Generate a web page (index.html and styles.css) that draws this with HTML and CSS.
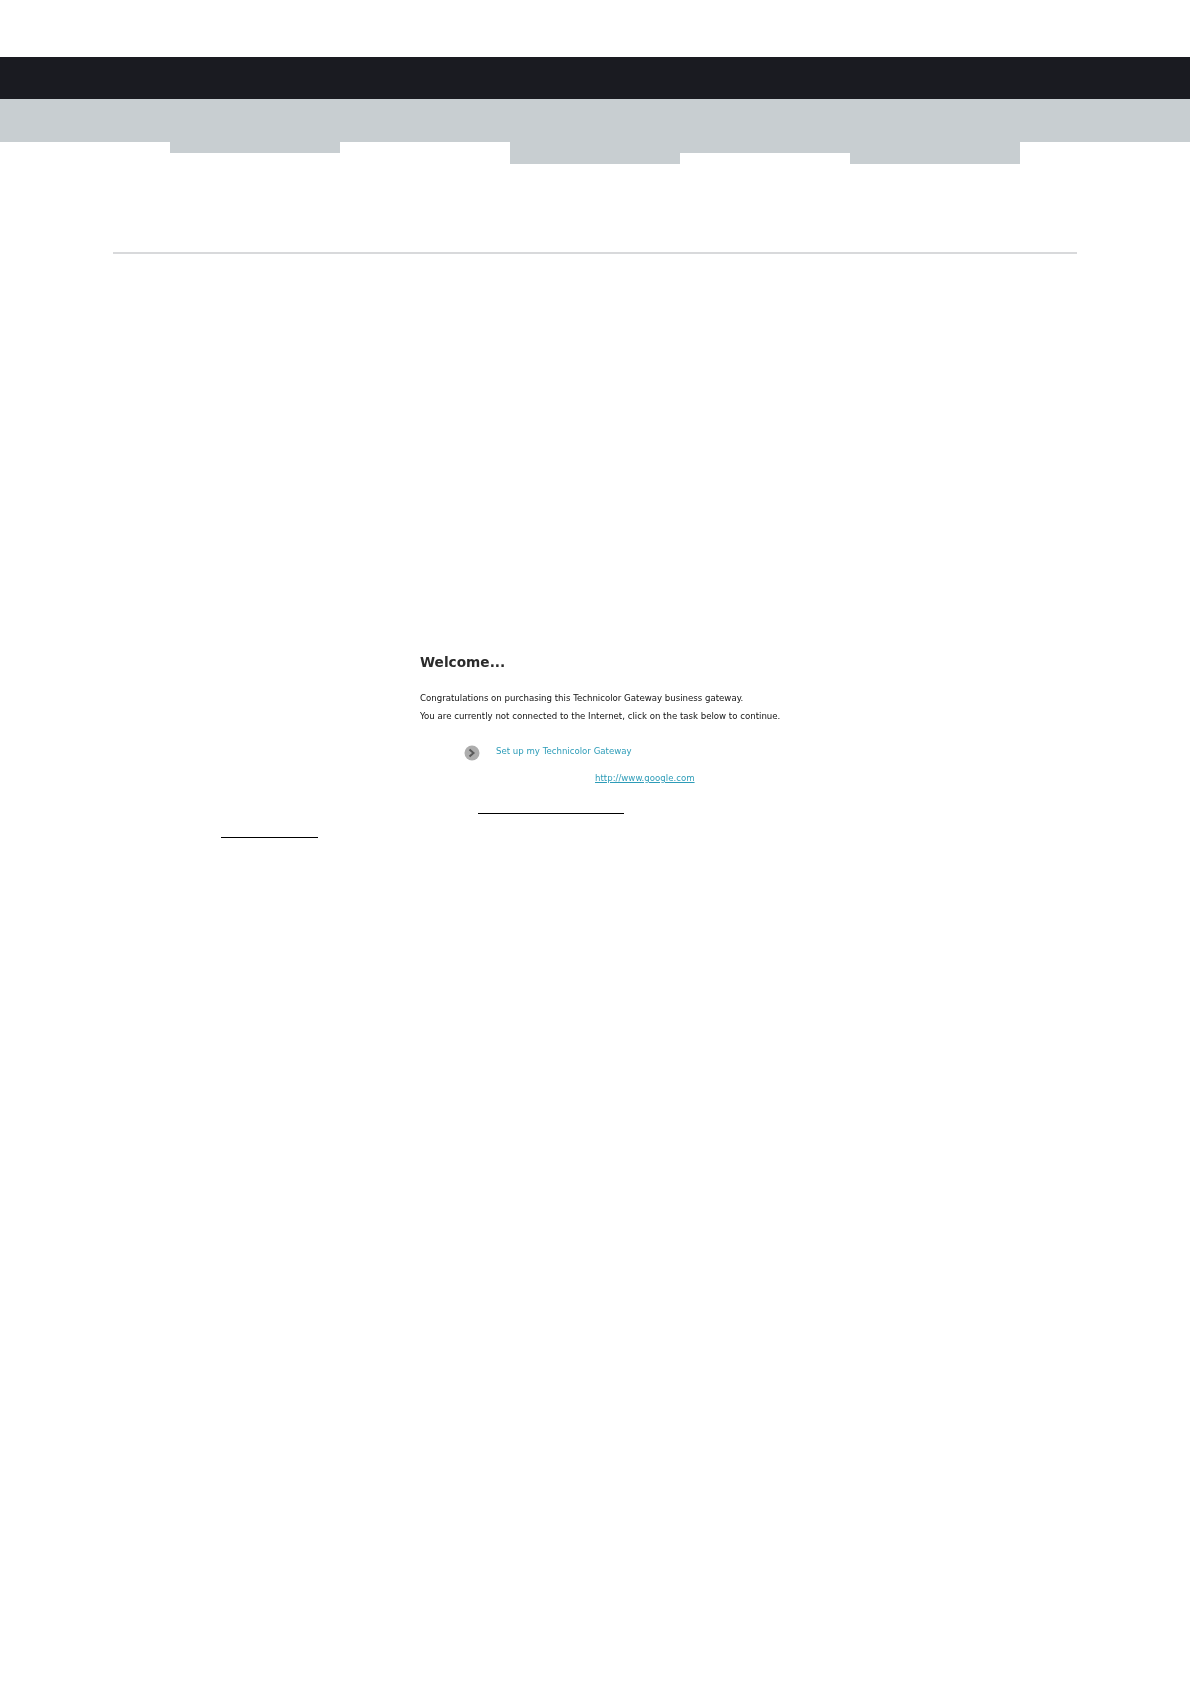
FILE: index.html
```html
<!DOCTYPE html>
<html lang="en">
<head>
    <meta charset="UTF-8">
    <meta name="viewport" content="width=device-width, initial-scale=1.0">
    <title>Welcome</title>
    <link rel="stylesheet" href="styles.css">
</head>
<body>
    <div class="top-bar"></div>
    <div class="sub-bar"></div>
    <div class="tabs">
        <div class="tab tab-short"></div>
        <div class="tab"></div>
        <div class="tab tab-tall"></div>
        <div class="tab tab-short"></div>
        <div class="tab tab-tall"></div>
    </div>
    <hr class="rule">

    <div class="welcome">
        <h1>Welcome...</h1>
        <p>Congratulations on purchasing this Technicolor Gateway business gateway.</p>
        <p>You are currently not connected to the Internet, click on the task below to continue.</p>
        <div class="task">
            <svg class="task-icon" width="16" height="16" viewBox="0 0 16 16">
                <circle cx="8" cy="8" r="7.5" fill="#adadad"/>
                <path d="M5.5 4.5 L9.5 8 L5.5 11.5" fill="none" stroke="#5a5a5a" stroke-width="2"/>
            </svg>
            <a class="task-link" href="#">Set up my Technicolor Gateway</a>
        </div>
        <a class="google-link" href="#">http://www.google.com</a>
    </div>

    <div class="line line-one"></div>
    <div class="line line-two"></div>
</body>
</html>
```

FILE: styles.css
```css
body {
    margin: 0;
    padding-top: 57px;
    background-color: #fff;
    font-family: "DejaVu Sans", sans-serif;
}

.top-bar {
    height: 42px;
    background-color: #1a1b21;
}

.sub-bar {
    height: 43px;
    background-color: #c8ced1;
}

/* Tabs hang off the grey bar, each one 170px wide */
.tabs {
    display: flex;
    height: 22px;
    padding-left: 170px;
}

.tab {
    width: 170px;
}

.tab-short {
    height: 11px;
    background-color: #c8ced1;
}

.tab-tall {
    height: 22px;
    background-color: #c8ced1;
}

.rule {
    height: 2px;
    margin: 88px 113px 0;
    border: none;
    background-color: #d8d9db;
}

/* The welcome block is a scaled screenshot in the original, so it is a bit soft */
.welcome {
    margin: 400px 0 0 420px;
    filter: blur(0.3px);
}

h1 {
    margin: 0 0 22px;
    font-size: 13.7px;
    line-height: 17px;
    color: #2b2b2b;
}

p {
    margin: 0 0 8px;
    font-size: 8.6px;
    line-height: 10px;
    color: #111;
}

.task {
    display: flex;
    align-items: center;
    margin: 24px 0 0 44px;
}

.task-link {
    margin: 0 0 4px 16px;
    font-size: 8.6px;
    color: #2d9cb8;
    text-decoration: none;
}

.google-link {
    display: block;
    margin: 12px 0 0 175px;
    font-size: 8.6px;
    color: #2d9cb8;
}

.line {
    height: 1px;
    background-color: #000;
}

.line-one {
    width: 146px;
    margin: 30px 0 0 478px;
}

.line-two {
    width: 97px;
    margin: 23px 0 0 221px;
}
```
